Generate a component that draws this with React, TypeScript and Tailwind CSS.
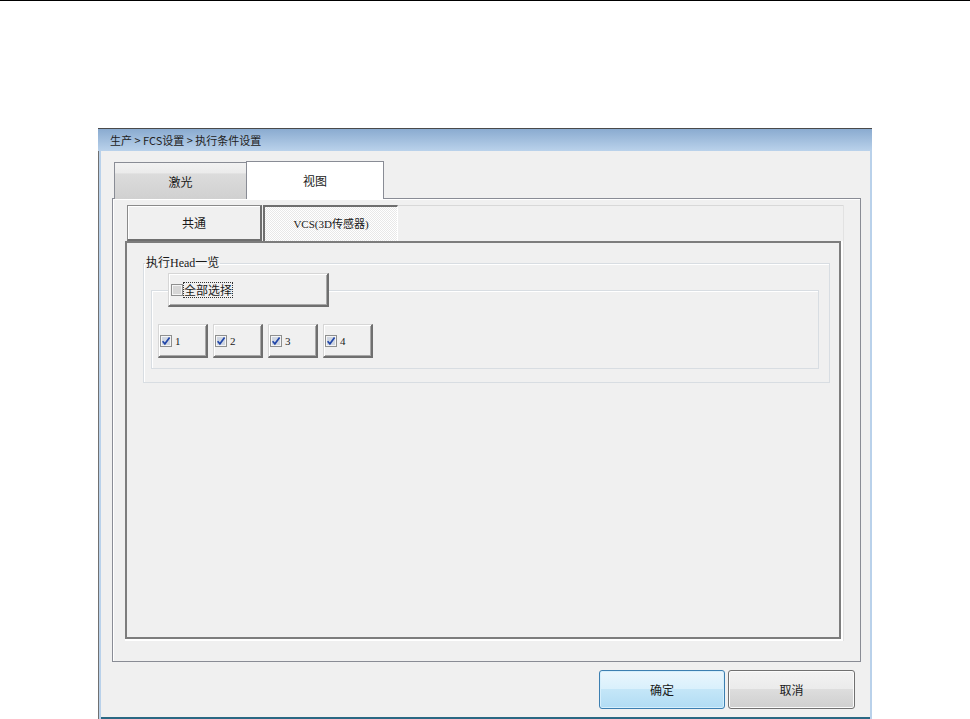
import React from "react";

const raised =
  "border-t border-l border-t-[#d6d6d6] border-l-[#d6d6d6] border-b-2 border-r-2 border-b-[#6f6f6f] border-r-[#6f6f6f] shadow-[inset_1px_1px_0_#ffffff,inset_-1px_-1px_0_#a8a8a8] bg-[#f0f0f0]";

function Check({ checked }: { checked: boolean }) {
  return (
    <svg width="12" height="12" viewBox="0 0 12 12" className="shrink-0">
      <rect x="0.5" y="0.5" width="11" height="11" fill="#f4f4f4" stroke="#8e8f8f" />
      <rect x="2" y="2" width="8" height="8" fill={checked ? "#cfd6e2" : "#d6d6d6"} />
      {checked && (
        <path d="M2.6 6.2 L4.9 8.8 L9.6 2.6" stroke="#2146a8" strokeWidth="1.7" fill="none" />
      )}
    </svg>
  );
}

export default function App() {
  return (
    <div className="w-[970px] h-[719px] bg-white overflow-hidden font-['Noto_Sans_CJK_SC',sans-serif] text-[#1a1a1a]">
      <div className="h-px bg-black" />
      <div className="ml-[98px] mt-[127px] w-[774px] h-[591px] flex flex-col">
        {/* title bar */}
        <div className="h-[23px] border-t border-t-[#4a4a4a] bg-[linear-gradient(to_bottom,#8aabd0,#bad2eb)] flex items-center pl-[12px] text-[11px] leading-[14px] text-[#222] whitespace-pre">
          生产 &gt; FCS设置 &gt; 执行条件设置
        </div>
        {/* body */}
        <div className="h-[568px] bg-[#f0f0f0] shadow-[inset_1px_0_0_#707070,inset_3px_0_0_#b9d1ea,inset_-2px_0_0_#b9d1ea,inset_0_-2px_0_#2a6883] pl-[14px] pt-[10px] flex flex-col">
          {/* outer tabs */}
          <div className="h-[38px] flex items-end relative z-10">
            <div className="ml-[2px] w-[133px] h-[37px] border-t border-l border-r border-[#898c95] bg-[linear-gradient(to_bottom,#f2f2f2_0%,#ebebeb_28%,#dcdcdc_30%,#d0d0d0_100%)] flex items-center justify-center text-[12px] leading-[14px] pt-[2px]">
              激光
            </div>
            <div className="-ml-px w-[138px] h-[38px] border-t border-l border-r border-[#898c95] bg-white flex items-center justify-center text-[12px] leading-[14px]">
              视图
            </div>
          </div>
          {/* outer panel */}
          <div className="-mt-px w-[749px] h-[464px] border border-[#898c95] bg-[#f0f0f0] shadow-[inset_1px_1px_0_#ffffff] pl-[12px] pt-[6px]">
            <div className="w-[719px] h-[436px] border-r border-b border-[#e2e2e2] flex flex-col">
              {/* inner tabs */}
              <div className="h-[36px] flex items-start">
                <div className="ml-[2px] w-[135px] h-[36px] border-t border-l border-t-[#8a8a8a] border-l-[#8a8a8a] border-b-2 border-r-2 border-b-[#6f6f6f] border-r-[#6f6f6f] shadow-[inset_1px_1px_0_#ffffff] bg-[#f0f0f0] flex items-center justify-center text-[12px] leading-[14px]">
                  共通
                </div>
                <div className="ml-px w-[135px] h-[37px] border-t-2 border-l-2 border-t-[#6f6f6f] border-l-[#6f6f6f] border-b border-r border-b-white border-r-white bg-[repeating-conic-gradient(#ffffff_0_25%,#e8e8e8_0_50%)] bg-[length:2px_2px] flex items-center justify-center text-[11px] leading-[14px] font-['Liberation_Serif','Noto_Sans_CJK_SC',serif]">
                  VCS(3D传感器)
                </div>
                <div className="flex-1 h-full border-t border-t-[#d8d8d8]" />
              </div>
              {/* inner panel */}
              <div className="w-[716px] h-[398px] border-2 border-[#7d7d7d] shadow-[1px_1px_0_1px_#ffffff] bg-[#f0f0f0] pl-[16px] pt-[12px]">
                <fieldset className="w-[687px] border border-[#d8dde2] shadow-[inset_1px_1px_0_#ffffff] px-0 pb-[13px]">
                  <legend className="ml-[1px] px-[1px] text-[12px] leading-[16px] font-['Liberation_Serif','Noto_Sans_CJK_SC',serif]">
                    执行Head一览
                  </legend>
                  <fieldset className="ml-[7px] mt-[2px] w-[668px] border border-[#d8dde2] shadow-[inset_1px_1px_0_#ffffff] px-0 pb-[10px]">
                    <legend className={`ml-[16px] w-[161px] h-[34px] ${raised} flex items-center pl-[2px] gap-0`}>
                      <Check checked={false} />
                      <span className="border border-dotted border-[#333] px-0 text-[12px] leading-[14px]">
                        全部选择
                      </span>
                    </legend>
                    <div className="pl-[6px] pt-[17px] flex gap-[5px]">
                      {[1, 2, 3, 4].map((n) => (
                        <div key={n} className={`w-[50px] h-[34px] ${raised} flex items-center pl-[1px] gap-[3px]`}>
                          <Check checked={true} />
                          <span className="text-[11px] leading-[12px] font-['Liberation_Serif',serif]">{n}</span>
                        </div>
                      ))}
                    </div>
                  </fieldset>
                </fieldset>
              </div>
            </div>
          </div>
          {/* bottom buttons */}
          <div className="mt-[8px] flex justify-end gap-[3px] pr-[17px]">
            <button className="w-[126px] h-[39px] rounded-[3px] border border-[#3c7fb1] bg-[linear-gradient(to_bottom,#eaf6fd_0%,#d9f0fc_48%,#c4e6f8_50%,#b1dcf4_100%)] shadow-[inset_0_0_0_1px_#d6effc] text-[12px] leading-[14px]">
              确定
            </button>
            <button className="w-[127px] h-[39px] rounded-[3px] border border-[#707070] bg-[linear-gradient(to_bottom,#f2f2f2_0%,#ebebeb_48%,#dddddd_50%,#cfcfcf_100%)] shadow-[inset_0_0_0_1px_#fbfbfb] text-[12px] leading-[14px]">
              取消
            </button>
          </div>
        </div>
      </div>
    </div>
  );
}
